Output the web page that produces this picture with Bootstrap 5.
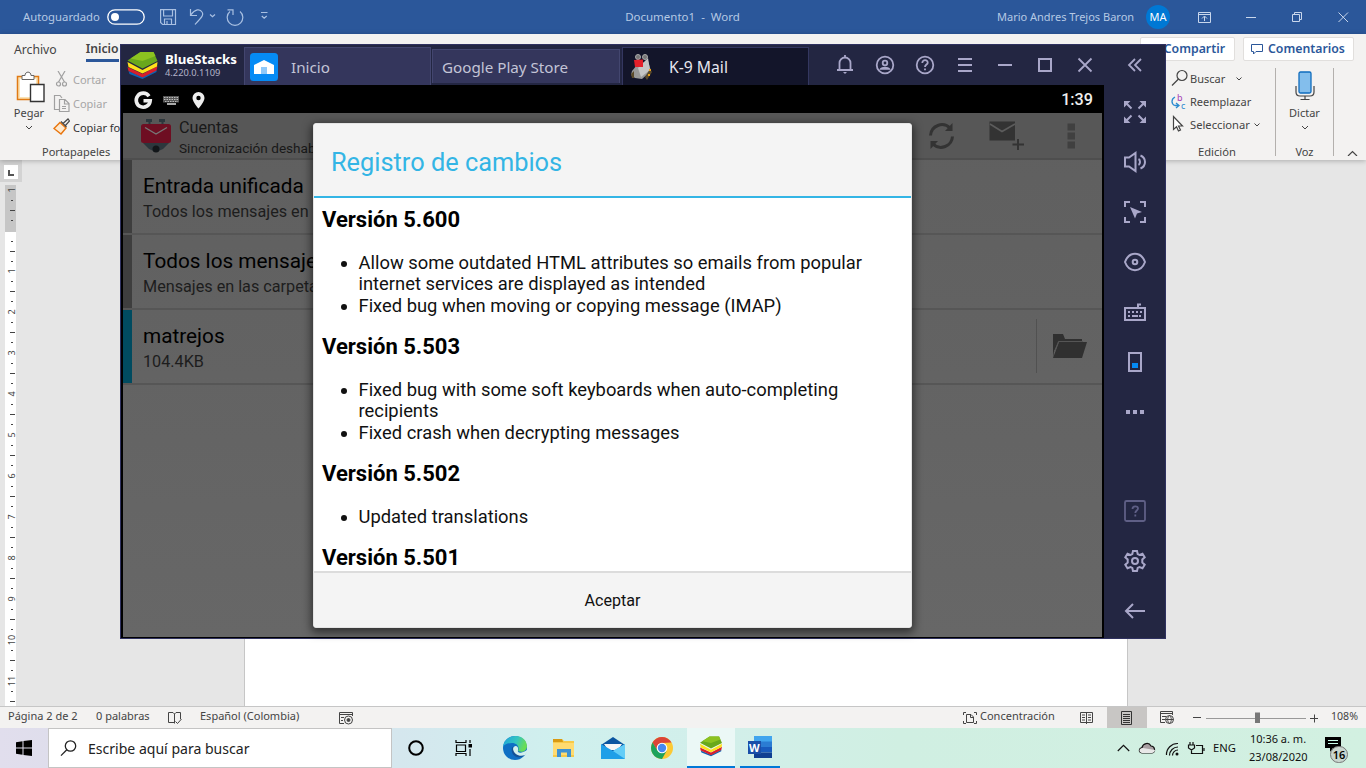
<!DOCTYPE html>
<html lang="es">
<head>
<meta charset="utf-8">
<meta name="viewport" content="width=device-width, initial-scale=1">
<title>Documento1 - Word</title>
<link rel="stylesheet" href="https://cdn.jsdelivr.net/npm/bootstrap@5.3.0/dist/css/bootstrap.min.css">
<style>
html,body{height:100%;overflow:hidden}
body{font:11px/16px "Noto Sans","Open Sans",sans-serif;color:#444;background:#e6e6e6;white-space:nowrap}
svg{display:block;flex:none}
.desktop{width:1366px;height:768px}
/* Word */
.titlebar{height:34px;background:#2b579a;color:#b5c9e4}
.tl-left{width:270px;padding-left:23px}
.tl-right{width:369px}
.avatar{width:24px;height:24px;background:#0078d4;color:#fff}
.ribbon{height:126px;background:#f3f2f1;box-shadow:0 1px 5px rgba(0,0,0,.25);z-index:1}
.tabrow{height:34px;font-size:12.2px;padding:0 12px 0 14px}
.tab-on{border-bottom:3px solid #2b579a;font-weight:600;height:28px;padding-top:7px;margin-left:29px;width:33px}
.wbtn{background:#fff;border:1px solid #e1dfdd;border-radius:2px;color:#2b579a;font-weight:600;font-size:12.3px;height:24px}
.big{height:76px}
.grp-name{height:16px;line-height:16px}
.dim{color:#a6a6a6}
.rule-v{width:1px;height:88px;background:#b3b0ad}
.doc{background:#e6e6e6}
.corner{width:22px;height:22px;background:#d3d3d3}
.corner div{width:14px;height:14px;background:#fff;margin:5px 0 0 4px}
.page{width:884px;background:#fff;border:1px solid #c6c6c6;border-width:0 1px}
.status{height:22px;background:#f3f2f1;border-top:1px solid #c6c6c6}
.status span{padding-bottom:3px}
.view-on{width:40px;background:#c8c6c4}
/* Taskbar */
.taskbar{height:40px;background:linear-gradient(90deg,#e1deed 0,#dfdeec 50px,#d5e7ee 400px,#cff0ee 560px,#d2efea 720px,#d0efe2 900px,#d2f0e1 1366px);color:#111}
.searchbox{width:344px;height:40px;background:#fff;border:1px solid #c4c4c4;font-size:14.05px;color:#222}
.task{width:49px;height:40px;display:flex;align-items:center;justify-content:center}
.task-on{background:#ebf8f6;border-bottom:2px solid #0078d7;padding-top:2px}
.badge16{left:5px;top:9px;width:18px;height:17px;border-radius:9px;background:#c9d6cf;border:1px solid #777;line-height:15px;font-weight:600}
/* BlueStacks */
.bs{left:120px;top:44px;width:1046px;height:595px;background:#232642;border:1px solid #2f3160;z-index:5;color:#a9a7c9}
.bs-head{height:40px}
.bs-name{width:124px;padding-left:6px}
.bs-name b{font-size:13.25px;line-height:14px;color:#fff}
.bs-name span{font-size:9.3px;line-height:13px;color:#b4b3c8}
.bs-tab{width:188px;height:38px;background:#34365c;border:1px solid #43466f;border-bottom:0;color:#c3c4d6;font-size:15.2px}
.bs-tool{width:40px;display:flex;justify-content:center}
.screen{width:983px;height:553px;background:#000;border:solid #000;border-width:0 2px 1px;font-family:Roboto,sans-serif}
.abar{height:28px}
.app{height:524px;background:linear-gradient(#5f5f5f,#676767);color:#191919}
.app-head{height:47px;background:#575757;border-bottom:2px solid #4e4e4e}
.acct{height:75px;border-bottom:2px solid #565656}
.stripe{width:9px;background:#3e3e3e}
.acct-t{font-size:20.75px;line-height:25px;color:#000}
.acct-s{font-size:16.2px;line-height:25px;color:#1d1d1d}
.dlg{left:192px;top:78px;width:599px;height:505px;background:#fff;border:1px solid #e4e4e4;border-radius:3px;box-shadow:0 3px 9px 2px rgba(0,0,0,.5);color:#111;font-family:Roboto,sans-serif}
.dlg-h{height:74px;background:#f4f4f4;border-bottom:2px solid #33b5e5;color:#33b5e5;font-size:25.35px;padding:3px 0 0 17px}
.dlg-b{font-size:18.36px;line-height:21.33px;padding:9px 9px 0 8px;white-space:normal}
.dlg-b h4{font:700 22px/26px Roboto,sans-serif;color:#000;margin:0 0 19px}
.dlg-b ul{margin:0 0 18px;padding-left:36.5px}
.dlg-f{height:56px;background:#f4f4f4;border-top:2px solid #dcdcdc;font-size:16.1px;color:#111;padding-top:2px}
.side{width:61px;padding:2px 0 0 1px}
.side div{height:50px;display:flex;align-items:center;justify-content:center}
</style>
</head>
<body>
<svg width="0" height="0" style="position:absolute">
 <defs>
  <g id="bslogo">
   <path d="M1 21 15 27 29 20 29 22 15 29 2 24Z" fill="#0c63b5"/>
   <path d="M0 17 15 24 30 16 29 20.500 15 27.500 1 21Z" fill="#d6202c"/>
   <path d="M0 12 15 20 30 12 29.500 16.500 15 23.500 1 17Z" fill="#ffe11a"/>
   <path d="M0 10.500 13 2 26 2 30 11 15 18.500Z" fill="#6aa81c"/>
   <path d="M3 8.500 13 2 26 2 28 6 15 11Z" fill="#8cc220"/>
  </g>
 </defs>
</svg>
<div class="desktop d-flex flex-column position-relative overflow-hidden">

 <!-- Word title bar -->
 <header class="titlebar d-flex justify-content-between align-items-center">
  <div class="tl-left d-flex align-items-center">
   <span style="font-size:11.3px;width:84px">Autoguardado</span>
   <svg width="38" height="16" fill="none" stroke="#fff" stroke-width="1.300"><rect x=".8" y=".8" width="36.400" height="14.400" rx="7.200"/><circle cx="8" cy="8" r="4" fill="#fff" stroke="none"/></svg>
   <svg style="margin-left:15px" width="108" height="20" fill="none" stroke="#a9c0e2" stroke-width="1.200"><path d="M0.600 2.600H15.500V17.500H2.600L.6 15.500ZM3.600 3V9H12.500V3M4.500 17V12H11.500V17M7 17V14M30.500 2V8.500H37M30.800 8C35 2 40 1.500 42 5 44 8 42 10 35 17.500M50 7.500 52.500 9.800 55 7.500M67.500 2.800H73V8M70 4.500A7.800 7.800 0 1 0 80 4.500M101 5.500H107.500M101.800 9 104.200 11.300 106.700 9"/></svg>
  </div>
  <span style="font-size:11.5px;white-space:pre;margin-left:98px">Documento1  -  Word</span>
  <div class="tl-right d-flex align-items-center">
   <span style="width:149px">Mario Andres Trejos Baron</span>
   <span class="avatar rounded-circle d-flex align-items-center justify-content-center">MA</span>
   <svg width="180" height="16" fill="none" stroke="#c9d7ec" stroke-width="1"><path d="M28.500 3.500H40.500V13.500H28.500ZM28.500 5.500H40.500M34.500 12V7.500M32 9.500 34.500 7 37 9.500M76 8.500H86M122.500 5.500H129.500V12.500H122.500ZM124.500 5V3.500H131.500V10.500H130M168.500 3.500 178 13M178 3.500 168.500 13"/></svg>
  </div>
 </header>

 <!-- Ribbon -->
 <section class="ribbon d-flex flex-column">
  <div class="tabrow d-flex justify-content-between">
   <div class="d-flex"><span style="padding-top:8px">Archivo</span><span class="tab-on">Inicio</span></div>
   <div class="d-flex" style="padding-top:3px">
    <div class="wbtn d-flex align-items-center justify-content-end" style="width:95px;padding-right:9px">Compartir</div>
    <div class="wbtn d-flex align-items-center" style="width:111px;margin-left:8px;padding-left:7px;gap:5px">
     <svg width="12" height="12" fill="none" stroke="#2b579a"><path d="M.5 1.500H11.500V8.500H5L2.500 11V8.500H.5Z"/></svg>Comentarios</div>
   </div>
  </div>
  <div class="d-flex justify-content-between">
   <div>
    <div class="d-flex big">
     <div class="d-flex flex-column align-items-center" style="width:58px">
      <svg width="30" height="32" style="margin:3px 0 0 3px" fill="none"><path d="M1.500 5.500H22.500V28.500H1.500Z" fill="#fbe3b5" stroke="#e07a14" stroke-width="1.500"/><path d="M4 8H20V26H4Z" fill="#fff"/><path d="M6 8.500V4.500H9C9 0 15 0 15 4.500H18V8.500Z" fill="#fff" stroke="#666"/><path d="M14.500 13.500H28V30.500H14.500Z" fill="#fff" stroke="#333" stroke-width="1.400"/></svg>
      <span style="margin-top:2px">Pegar</span>
      <svg width="8" height="6" fill="none" stroke="#444" style="margin-top:4px"><path d="M1 1 4 4 7 1"/></svg>
     </div>
     <svg width="17" height="66" style="margin:3px -2px 0 -5px" fill="none" stroke="#a0a0a0" stroke-width="1.200"><path d="M5 0 11.500 11M12 0 5.500 11"/><circle cx="5.500" cy="13" r="2"/><circle cx="11.500" cy="13" r="2"/><path d="M6.500 38.500H1.500V24.500H7L9 27M6.500 28.500H12L16 32.500V40.500H6.500ZM11.500 28.500V33H16M9 35.500H13M9 37.500H13"/><path d="M7 51.500 13 57 8 63 1 57.500Z" fill="#fde9cf" stroke="#e8740c" stroke-width="1.400"/><path d="M8 50.500 13.500 56M10 52.500 15 48 16.500 50 12 55" stroke="#444"/></svg>
     <div class="d-flex flex-column" style="margin-left:5px"><span class="dim" style="margin-top:4px">Cortar</span><span class="dim" style="margin-top:8px">Copiar</span><span style="margin-top:8px;color:#333">Copiar formato</span></div>
    </div>
    <div class="grp-name" style="padding-left:42px">Portapapeles</div>
   </div>
   <div class="d-flex">
    <div style="width:104px">
     <div class="d-flex big">
      <svg width="18" height="66" fill="none" stroke="#444" stroke-width="1.200" style="margin:1px 1px 0 0"><circle cx="11" cy="6.500" r="5"/><path d="M7.500 10 1 16.500"/><path d="M2.500 47.500V60.500L5.500 57.800 7.500 62 9.500 61 7.500 57H11.500Z" fill="#fff"/><path d="M4 28C0 30 0 35 4 36.500H8M5 34 8 36.500 5 39" stroke="#2b8ad0" stroke-width="1.300"/><text x="6" y="32" font-size="9" fill="#a33cb5" stroke="none">b</text><text x="10" y="40" font-size="9" fill="#2b8ad0" stroke="none">c</text></svg>
      <div class="d-flex flex-column"><span style="margin-top:3px">Buscar</span><span style="margin-top:7px">Reemplazar</span><span style="margin-top:7px;font-size:11.200px">Seleccionar</span></div>
      <svg width="28" height="60" fill="none" stroke="#444" style="margin:0 0 0 -16px"><path d="M1.500 9.500 4 12 6.500 9.500M19.500 55.500 22 58 24.500 55.500"/></svg>
     </div>
     <div class="grp-name" style="padding-left:27px;font-size:11.200px">Edición</div>
    </div>
    <div class="rule-v"></div>
    <div class="d-flex flex-column align-items-center" style="width:57px">
     <svg width="20" height="30" fill="none" style="margin-top:3px"><rect x="4" y="1" width="12" height="21" rx="1.500" fill="#83beec" stroke="#0f6cbd" stroke-width="1.300"/><path d="M1 15V21C1 24 3 25 5 25H15C17 25 19 24 19 21V15M10 25V28M5.500 28.500H14.500" stroke="#444" stroke-width="1.200"/></svg>
     <span style="margin-top:4px">Dictar</span>
     <svg width="8" height="6" fill="none" stroke="#444" style="margin-top:4px"><path d="M1 1 4 4 7 1"/></svg>
     <span style="margin-top:13px">Voz</span>
    </div>
    <div class="rule-v"></div>
    <svg width="32" height="88" fill="none" stroke="#444" stroke-width="1.200"><path d="M14 88 18.500 83.500 23 88"/></svg>
   </div>
  </div>
 </section>

 <!-- Document area with vertical ruler -->
 <main class="doc d-flex flex-grow-1">
  <div style="width:244px">
   <div class="corner d-flex"><div><svg width="14" height="14"><path d="M5 5V10H10" fill="none" stroke="#555" stroke-width="2"/></svg></div></div>
   <svg id="ruler" width="22" height="524" font-size="9" fill="#444"><rect x="5" y="3" width="11" height="521" fill="#fff"/><rect x="5" y="3" width="11" height="47" fill="#c6c6c6"/></svg>
  </div>
  <div class="page"></div>
 </main>

 <!-- Word status bar -->
 <footer class="status d-flex justify-content-between">
  <div class="d-flex align-items-center" style="padding-left:8px">
   <span style="width:88px">Página 2 de 2</span><span style="width:71px">0 palabras</span>
   <svg width="33" height="14" fill="none" stroke="#444"><path d="M8 11.500H1.500V1.500H6L7.500 3 9 1.500H13.500V8M7.500 3V12.500M8.500 10.500 10.500 12.500 14.500 8"/></svg>
   <span style="width:139px">Español (Colombia)</span>
   <svg width="15" height="14" fill="none" stroke="#444"><path d="M5 12.500H.5V1.500H13.500V5M.5 3.500H13.500M2 6.500H5M2 9.500H4"/><circle cx="9.500" cy="9" r="4"/><circle cx="9.500" cy="9" r="1.500" fill="#444"/></svg>
  </div>
  <div class="d-flex align-items-center align-self-stretch">
   <svg width="17" height="14" fill="none" stroke="#444"><path d="M3 1.500H.5V4M.5 10V12.500H3M11 12.500H13.500V10M11 1.500H13.500V4M3.500 3.500H8L10.500 6V11.500H3.500ZM7.500 3.500V6.500H10.500"/></svg>
   <span style="width:100px">Concentración</span>
   <svg width="27" height="14" fill="none" stroke="#444"><path d="M.5 1.500H12.500V11.500H.5ZM6.500 1.500V13M2 4H5M2 6.500H5M2 9H5M8 4H11M8 6.500H11M8 9H11"/></svg>
   <div class="view-on align-self-stretch d-flex align-items-center justify-content-center"><svg width="12" height="14" fill="none" stroke="#333"><path d="M.5.500H10.500V13.500H.5ZM2 3.500H9M2 5.500H9M2 7.500H9M2 9.500H9M2 11.500H9"/></svg></div>
   <svg width="45" height="15" fill="none" stroke="#444" style="margin-left:13px"><path d="M5 12.500H.5V1.500H12.500V5M.5 3.500H12.500M2 6.500H6M2 9.500H5M33 7.500H41"/><circle cx="9.500" cy="9.500" r="4"/><path d="M5.500 9.500H13.500M9.500 5.500C7 8 7 11 9.500 13.500 12 11 12 8 9.500 5.500"/></svg>
   <svg width="126" height="14" fill="none" stroke="#444"><path d="M1 7.500H101" stroke="#999"/><path d="M50 1.500H55V12H50Z" fill="#777" stroke="none"/><path d="M105 7.500H113M109.500 3.500V11.500"/></svg>
   <span style="width:35px;font-size:10.600px">108%</span>
  </div>
 </footer>

 <!-- Windows taskbar -->
 <nav class="taskbar d-flex justify-content-between">
  <div class="d-flex">
   <div class="task" style="width:48px"><svg width="16" height="16"><path d="M0 2.200 6.500 1.300V7.500H0ZM7.500 1.100 16 0V7.500H7.500ZM0 8.500H6.500V14.700L0 13.800ZM7.500 8.500H16V16L7.500 14.900Z"/></svg></div>
   <div class="searchbox d-flex align-items-center" style="padding:1px 0 0 11px;gap:11px"><svg width="17" height="17" fill="none" stroke="#222" stroke-width="1.300"><circle cx="10.500" cy="6" r="5.200"/><path d="M6.800 9.800 1 15.600"/></svg>Escribe aquí para buscar</div>
   <div class="task" style="width:48px"><svg width="18" height="18"><circle cx="9" cy="9" r="6.800" fill="none" stroke="#000" stroke-width="2"/></svg></div>
   <div class="task" style="width:50px;padding-right:3px"><svg width="17" height="16" fill="none" stroke="#000" stroke-width="1.200"><path d="M1 0V2.500H11V0M1.500 5H10.500V11.500H1.500ZM1 16V13.500H11V16M15 0V3M15 9V16"/><path d="M13.500 4H17V7.500H13.500Z" fill="#000" stroke="none"/></svg></div>
   <div class="task"><svg width="24" height="24"><defs><linearGradient id="e1" x2="1" y2=".3"><stop stop-color="#1ba3dd"/><stop offset=".6" stop-color="#35c5c0"/><stop offset="1" stop-color="#69dd55"/></linearGradient></defs><circle cx="12" cy="12" r="12" fill="#0f6fc4"/><path d="M0 11C1-3 23-4 24 10 24 15 19 17 15 15 17 11 14 7 9 7 4 7 1 9 0 11Z" fill="url(#e1)"/><path d="M9 11C7 20 15 24 22 19 17 20 12 17 12 12Z" fill="#155196"/><path d="M10 13C11 8 16 10 15 14 14 17 18 18 24 14L24 16 22 19C17 21 11 19 10 13Z" fill="#d3f0ed"/></svg></div>
   <div class="task"><svg width="22" height="19"><path d="M0 0H9L11 2H21V18H0Z" fill="#f7c948"/><path d="M0 0H9L10 3H0Z" fill="#d99a12"/><path d="M0 4H21V16H0Z" fill="#ffdb70"/><path d="M4 18V10H18V18H14V13.500H8V18Z" fill="#3f92d2"/></svg></div>
   <div class="task"><svg width="24" height="22"><path d="M0 8 12 0 24 8 12 15Z" fill="#0b55a0"/><path d="M3 7H21L17 13H7Z" fill="#f6f6f6"/><path d="M0 7 12 14 24 7V22H0Z" fill="#1f9fe8"/><path d="M12 14 24 7V22Z" fill="#63cdf7"/></svg></div>
   <div class="task"><svg width="22" height="22"><circle cx="11" cy="11" r="11" fill="#fcc934"/><path d="M1.500 5.500A11 11 0 0 1 20.500 5.500L11 6 6.300 13.800Z" fill="#db4437"/><path d="M1.500 5.500A11 11 0 0 0 11 22L15.500 14 11 15.500 6.500 13.500Z" fill="#1da25b"/><circle cx="11" cy="11" r="5.300" fill="#fff"/><circle cx="11" cy="11" r="4.200" fill="#4688f1"/></svg></div>
   <div class="task task-on" style="margin-left:1px;width:48px;padding:0 0 2px"><svg width="24" height="22" viewBox="0 0 30 30"><use href="#bslogo"/></svg></div>
   <div class="d-flex justify-content-center align-items-center" style="width:40px;margin-left:5px;border-bottom:2px solid #0078d7"><svg width="24" height="22"><path d="M6 0H24V6H6Z" fill="#41a5ee"/><path d="M6 5.500H24V11H6Z" fill="#2b7cd3"/><path d="M6 11H24V16.500H6Z" fill="#185abd"/><path d="M6 16.500H24V22H6Z" fill="#103f91"/><rect y="5" width="13" height="13" fill="#1a4fa8"/><text x="1" y="15.500" font-size="11" font-weight="700" fill="#fff">W</text></svg></div>
  </div>
  <div class="d-flex align-items-center">
   <svg width="95" height="20" fill="none" stroke="#111" stroke-width="1.200"><path d="M.8 13 6.500 7.300 12.200 13"/><path d="M25 15C21 14 22 10 25 9.500 26 5 32 4 34 8 38 8 39 14 35 15Z" fill="#a9a0a3"/><path d="M25 15C21 14 22 10 26 10L38 12C38 14 36 15 35 15Z" fill="#e8e8e8" stroke="none"/><path d="M49.500 17A11 11 0 0 1 61 5.500M52.500 17.500A8.500 8.500 0 0 1 61 9M55.500 17.500A5.500 5.500 0 0 1 61 12"/><circle cx="60" cy="16" r="1.500" fill="#111" stroke="none"/><path d="M73 4V7M76 4V7M71.500 7H77.500V10L74.500 12 71.500 10ZM74.500 12V15.500H85.500V7.500H79M87 10V13"/></svg>
   <span style="width:36px;margin-left:1px;font-size:11.200px">ENG</span>
   <div class="text-center" style="width:58px;line-height:17.500px;padding-bottom:1px">10:36 a. m.<br>23/08/2020</div>
   <div class="position-relative" style="width:41px;height:26px;margin:3px 0 0 18px"><svg width="17" height="18"><path d="M0 0H16V11H8L5 15V11H0Z"/><path d="M3 3.500H13M3 6.500H13" stroke="#cfe"/></svg><span class="badge16 position-absolute text-center text-black">16</span></div>
  </div>
 </nav>

 <!-- BlueStacks window -->
 <section class="bs position-absolute d-flex flex-column">
  <div class="bs-head d-flex">
   <div class="bs-name d-flex align-items-center">
    <svg width="32" height="30" viewBox="0 0 31 30" style="margin-top:-1px"><use href="#bslogo"/></svg>
    <div class="d-flex flex-column" style="margin:0 0 0 6px"><b>BlueStacks</b><span>4.220.0.1109</span></div>
   </div>
   <div class="bs-tab d-flex align-items-center align-self-end" style="padding-left:5px;margin-left:-1px;width:187px"><svg width="28" height="28"><rect width="28" height="28" rx="3.500" fill="#058bf5"/><path d="M4 21V12L14 7 24 12V21Z" fill="#fff"/><path d="M11 21V14H17V21Z" fill="#8ec9fa"/></svg><span style="margin-left:13px">Inicio</span></div>
   <div class="bs-tab d-flex align-items-center" style="padding-left:9px;margin:4px 0 0 1px;height:34px">Google Play Store</div>
   <div class="bs-tab d-flex align-items-center align-self-end" style="margin-left:2px;width:187px;padding-left:7px;background:#13152a;color:#e6e6ef;border-color:#343760">
    <svg width="24" height="28"><path d="M2 18 7 12 18 8 21 18 12 26 5 25 1 22Z" fill="#999"/><path d="M8 15 18 5 20 17 11 24Z" fill="#c5c5c5"/><circle cx="8" cy="4" r="2.500" fill="#777" stroke="#aaa"/><circle cx="15" cy="4" r="2.500" fill="#777" stroke="#aaa"/><path d="M4 7 13 6.500V14H5Z" fill="#e3202a"/><path d="M1 21 4 18V25H2ZM15 24 20 16 22 19 17 27Z" fill="#5b4a2a"/><path d="M19 17H21M18 22H20" stroke="#e8a21c" stroke-width="2"/></svg>
    <span style="margin-left:15px;font-size:15.700px">K-9 Mail</span></div>
   <div class="d-flex align-items-center" style="margin-left:16px">
    <div class="bs-tool"><svg width="20" height="22" fill="none" stroke="#a9a7c9" stroke-width="1.800"><path d="M2 16H18M4.500 16V9A5.500 5.500 0 0 1 15.500 9V16M10 1V4"/><path d="M8 18H12L10 20Z" fill="#a9a7c9" stroke="none"/></svg></div>
    <div class="bs-tool"><svg width="20" height="20" fill="none" stroke="#a9a7c9" stroke-width="1.800"><circle cx="10" cy="10" r="8.300"/><circle cx="10" cy="8" r="2.300"/><path d="M6 13.800C7 12.300 13 12.300 14 13.800Z"/></svg></div>
    <div class="bs-tool"><svg width="20" height="20" fill="none" stroke="#a9a7c9" stroke-width="1.800"><circle cx="10" cy="10" r="8.300"/><path d="M7.300 8C7.300 4 13 4.500 12.700 7.800 12.500 9.500 10 9.700 10 12M10 13.500V15.300"/></svg></div>
    <div class="bs-tool"><svg width="16" height="16" stroke="#a9a7c9" stroke-width="2"><path d="M1 2H15M1 8H15M1 14H15"/></svg></div>
    <div class="bs-tool"><svg width="16" height="16" stroke="#a9a7c9" stroke-width="2"><path d="M1 8H15"/></svg></div>
    <div class="bs-tool"><svg width="16" height="16" fill="none" stroke="#a9a7c9" stroke-width="2"><path d="M2 2H14V14H2Z"/></svg></div>
    <div class="bs-tool"><svg width="16" height="16" fill="none" stroke="#a9a7c9" stroke-width="1.800"><path d="M1.500 1.500 14.500 14.500M14.500 1.500 1.500 14.500"/></svg></div>
    <div class="bs-tool" style="width:60px"><svg width="16" height="16" fill="none" stroke="#a9a7c9" stroke-width="1.800"><path d="M8 2 2 8 8 14M14 2 8 8 14 14"/></svg></div>
   </div>
  </div>
  <div class="d-flex">
   <div class="screen">
    <div class="abar d-flex align-items-center justify-content-between">
     <svg width="90" height="22" fill="none" style="margin-top:1px"><path d="M26.500 6.700A7 7 0 1 0 27.700 11.300H21" stroke="#eee" stroke-width="3.600" transform="translate(-.5 .5)"/><g fill="#aaa"><path d="M40 7H56V13.500H40Z" opacity=".5"/><path d="M44 14H53V16H44Z"/></g><path d="M41 8.500H56M41 10.500H56M42 12.500H55" stroke="#bbb" stroke-width="1" stroke-dasharray="1.500 1"/><path d="M75.500 3A6 6 0 0 1 81.500 9C81.500 13 75.500 19.500 75.500 19.500S69.500 13 69.500 9A6 6 0 0 1 75.500 3ZM75.500 6.800A2.200 2.200 0 1 0 75.500 11.200 2.200 2.200 0 0 0 75.500 6.800Z" fill="#eee" fill-rule="evenodd"/></svg>
     <span style="font-size:16.200px;font-weight:500;color:#eee;padding:2px 9px 0 0">1:39</span>
    </div>
    <div class="app">
     <div class="app-head d-flex justify-content-between align-items-center">
      <div class="d-flex align-items-center">
       <svg width="32" height="36" style="margin:0 7px 0 17px"><path d="M6 1H12V4H10.500V7H8.500V4H6ZM19 1H25V4H23.500V7H21.500V4H19Z" fill="#2c373d"/><path d="M3 25H29L23 31 16 34 9 31Z" fill="#2c373d"/><rect x="1" y="6" width="30" height="19" rx="2.500" fill="#6e0e22"/><path d="M5 9.500 16 16 27 9.500" stroke="#777" fill="none" stroke-width="1.400"/><ellipse cx="16" cy="31" rx="3.500" ry="3.500" fill="#121619"/></svg>
       <div style="padding-top:4px"><div style="font-size:16.200px;line-height:19px">Cuentas</div><div style="font-size:13.600px;line-height:20px;padding-top:1px">Sincronización deshabilitada</div></div>
      </div>
      <svg width="160" height="32" fill="none" stroke="#333" stroke-width="3" style="margin-right:13px"><g transform="translate(-10 0)"><path d="M11.500 15.500A11.500 11.500 0 0 1 31 8M33.500 16.500A11.500 11.500 0 0 1 14 24"/><path d="M33.500 3V11H26ZM11.500 29V21H19Z" fill="#333" stroke="none"/></g><path d="M60.500 1.500H86V20.500H60.500Z" fill="#333" stroke="none"/><path d="M61 4 73 11.500 86 4" stroke="#5c5c5c" stroke-width="1.600"/><path d="M89 19V30M83.500 24.500H95" stroke-width="2"/><path d="M138.500 3.500H146V10.500H138.500ZM138.500 12.500H146V19.500H138.500ZM138.500 21.500H146V28.500H138.500Z" fill="#404040" stroke="none"/></svg>
     </div>
     <div class="acct d-flex"><div class="stripe"></div><div style="padding:14px 0 0 11px"><div class="acct-t">Entrada unificada</div><div class="acct-s">Todos los mensajes en la Entrada</div></div></div>
     <div class="acct d-flex"><div class="stripe"></div><div style="padding:14px 0 0 11px"><div class="acct-t">Todos los mensajes</div><div class="acct-s">Mensajes en las carpetas</div></div></div>
     <div class="acct d-flex"><div class="stripe" style="background:#004b60"></div><div class="flex-grow-1" style="padding:14px 0 0 11px"><div class="acct-t">matrejos</div><div class="acct-s">104.4KB</div></div>
      <div class="d-flex align-items-center" style="height:54px;margin-top:9px;border-left:1px solid #515151;padding:0 15px 0 16px"><svg width="34" height="25" fill="#303030"><path d="M0 24V0H10L12 5H29V7H6L1 17Z"/><path d="M6 8H34L29 24H0Z"/><path d="M5.500 7.500H30M5.500 7.500 1.500 18" stroke="#555" fill="none"/></svg></div></div>
    </div>
   </div>
   <aside class="side">
    <div><svg width="24" height="24" fill="none" stroke="#a9a7c9" stroke-width="2"><path d="M2 2 8.500 8.500M22 2 15.500 8.500M22 22 15.500 15.500M2 22 8.500 15.500"/><path d="M1 1H7.500L1 7.500ZM23 1H16.500L23 7.500ZM1 23H7.500L1 16.500ZM23 23H16.500L23 16.500Z" fill="#a9a7c9" stroke="none"/></svg></div>
    <div><svg width="24" height="22" fill="none" stroke="#a9a7c9" stroke-width="2"><path d="M2 6.500H6L12.500 2V20L6 15.500H2ZM15.500 8C17.500 9 17.500 13 15.500 14M17.500 4.500C23.500 7 23.500 15 17.500 17.500"/></svg></div>
    <div><svg width="24" height="24" fill="none" stroke="#a9a7c9" stroke-width="2"><path d="M2 7V2H7M17 2H22V7M22 17V22H17M7 22H2V17"/><path d="M7 7 19 12 14 13.500 12 18.500Z" fill="#a9a7c9" stroke="none"/></svg></div>
    <div><svg width="24" height="20" fill="none" stroke="#a9a7c9" stroke-width="2"><path d="M2 10C6-1 18-1 22 10 18 21 6 21 2 10Z"/><circle cx="12" cy="10" r="2.300"/></svg></div>
    <div><svg width="24" height="20" fill="none" stroke="#a9a7c9" stroke-width="2"><path d="M2 6H22V18H2ZM15 6V2.500H18"/><path d="M5 10H19M5 14H8M16 14H19" stroke-dasharray="2 2"/><path d="M9 14H15"/></svg></div>
    <div><svg width="24" height="22" fill="none" stroke="#a9a7c9" stroke-width="2"><path d="M6 2H18V20H6Z"/><path d="M9 12H15V17H9Z" fill="#058bf5" stroke="none"/></svg></div>
    <div><svg width="20" height="6" fill="#a9a7c9"><path d="M1 1H5V5H1ZM8 1H12V5H8ZM15 1H19V5H15Z"/></svg></div>
    <div style="height:49px"></div>
    <div><svg width="24" height="24" fill="none" stroke="#5f5f86" stroke-width="1.800"><rect x="2" y="2" width="20" height="20" rx="1.500"/><path d="M9.500 10C9.500 6.500 15 6.500 15 9.500 15 11.500 12.300 11.500 12.300 14M12.300 15.500V17.500"/></svg></div>
    <div><svg width="24" height="24" fill="none" stroke="#a9a7c9" stroke-width="2"><path d="M10 2H14L14.700 5 16.500 6 19.500 4.800 21.700 8.300 19.300 10.500V13.500L21.700 15.700 19.500 19.200 16.500 18 14.700 19 14 22H10L9.300 19 7.500 18 4.500 19.200 2.300 15.700 4.700 13.500V10.500L2.300 8.300 4.500 4.800 7.500 6 9.300 5Z"/><circle cx="12" cy="12" r="3"/></svg></div>
    <div><svg width="22" height="18" fill="none" stroke="#a9a7c9" stroke-width="2"><path d="M21 9H2M9 2 2 9 9 16"/></svg></div>
   </aside>
  </div>

  <!-- Changelog dialog -->
  <div class="dlg position-absolute d-flex flex-column overflow-hidden">
   <div class="dlg-h d-flex align-items-center flex-shrink-0">Registro de cambios</div>
   <div class="dlg-b flex-grow-1 overflow-hidden">
    <h4>Versión 5.600</h4>
    <ul><li>Allow some outdated HTML attributes so emails from popular internet services are displayed as intended</li><li>Fixed bug when moving or copying message (IMAP)</li></ul>
    <h4>Versión 5.503</h4>
    <ul><li>Fixed bug with some soft keyboards when auto-completing recipients</li><li>Fixed crash when decrypting messages</li></ul>
    <h4>Versión 5.502</h4>
    <ul><li>Updated translations</li></ul>
    <h4>Versión 5.501</h4>
   </div>
   <div class="dlg-f d-flex align-items-center justify-content-center flex-shrink-0">Aceptar</div>
  </div>
 </section>
</div>
<script src="https://cdn.jsdelivr.net/npm/bootstrap@5.3.0/dist/js/bootstrap.bundle.min.js"></script>
<script>
// Centimetre marks of the vertical ruler: a number, then dot, dash, dot.
const ruler = document.getElementById('ruler');
let marks = '';
const label = (n, y) => `<text transform="translate(15 ${y}) rotate(-90)" text-anchor="middle">${n}</text>`;
const tick = (y, w) => `<rect x="${w > 2 ? 10 : 11}" y="${y}" width="${w}" height="1"/>`;
marks += label(1, 8) + tick(18, 2) + tick(28, 5) + tick(38, 2) + tick(59, 2) + tick(69, 5) + tick(79, 2);
for (let n = 1; n <= 11; n++) {
  const y = 89 + (n - 1) * 41;
  marks += label(n, y) + tick(y + 10, 2) + tick(y + 20, 5);
  if (n < 11) marks += tick(y + 30, 2);
}
ruler.insertAdjacentHTML('beforeend', marks);
</script>
</body>
</html>
